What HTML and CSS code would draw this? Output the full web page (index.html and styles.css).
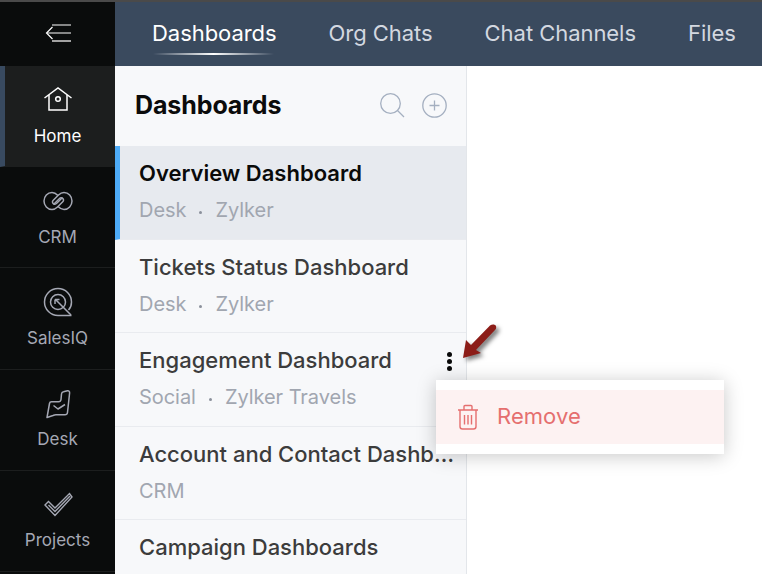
FILE: index.html
```html
<!DOCTYPE html>
<html lang="en">
<head>
<meta charset="utf-8">
<title>Dashboards</title>
<link rel="stylesheet" href="styles.css">
</head>
<body>
<div class="app">
  <nav class="rail">
    <div class="rail-top">
      <svg width="26" height="18" viewBox="0 0 26 18" fill="none" stroke="#fff" stroke-width="1.2"><path d="M7 1H26M2 9H26" /><path d="M7 17H26" stroke="#c9c9c9" stroke-width="1.6" /><path d="M7.500 3L1.500 9L7.500 15" /></svg>
    </div>
    <a class="rail-item active">
      <svg width="30" height="26" viewBox="0 0 30 26" fill="none" stroke="#fff" stroke-width="1.5"><path d="M1.500 12L15 2L28.500 12" /><path d="M6 9V24H24V9" /><circle cx="15" cy="13" r="2.300" /></svg>
      <span>Home</span>
    </a>
    <a class="rail-item">
      <svg width="30" height="20" viewBox="0 0 30 20" fill="none" stroke="#a5a8b4" stroke-width="1.500"><path d="M15 4.500C13 2.500 11 1.500 9 1.500C4.500 1.500 1 5.500 1 10C1 14.500 4.500 18.500 9 18.500C11.500 18.500 13 17.500 14.500 16L20 10.500C21 9.500 20.500 7.500 19 7C18 6.500 17 7 16 8L10.500 13.500" /><path d="M15 15.500C17 17.500 19 18.500 21 18.500C25.500 18.500 29 14.500 29 10C29 5.500 25.500 1.500 21 1.500C18.500 1.500 17 2.500 15.500 4L10 9.500C9 10.500 9.500 12.500 11 13C12 13.500 13 13 14 12L19.500 6.500" /></svg>
      <span>CRM</span>
    </a>
    <a class="rail-item">
      <svg width="30" height="30" viewBox="0 0 30 30" fill="none" stroke="#a5a8b4" stroke-width="1.500"><path d="M28.500 28.500H15A13.500 13.500 0 1 1 28.500 15C28.500 18 27.500 21 25.500 23" /><circle cx="15" cy="15" r="7.500" /><path d="M13 13L28 28M12 12.500V17M12 12.500H16.500" /></svg>
      <span>SalesIQ</span>
    </a>
    <a class="rail-item">
      <svg width="26" height="30" viewBox="0 0 26 30" fill="none" stroke="#a5a8b4" stroke-width="1.500" stroke-linejoin="round"><path d="M2 28.500L4.500 14.500C4.700 13.300 5.500 12.800 6.500 12.800H13.500C15 12.800 15.800 12 16 10.500L16.500 5C16.600 3.800 17.500 3 18.500 2.800L22.500 1.800C23.800 1.600 24.800 2.500 24.600 4L22.500 23.500C22.300 25 21.300 25.700 20 25.700H11C9.800 25.700 9 26 8 26.500L2 28.500Z" /><path d="M8.500 16.500L13 20L20 15.500" /></svg>
      <span>Desk</span>
    </a>
    <a class="rail-item">
      <svg width="30" height="26" viewBox="0 0 30 26" fill="none" stroke="#a5a8b4" stroke-width="1.400"><path d="M2 13L5.500 9.500L12 16L26.500 1.500L29 5L12 23.500Z" /><path d="M5.500 13L12 19.500L27 4" /></svg>
      <span>Projects</span>
    </a>
  </nav>
  <main class="main">
    <header class="tabs">
      <a class="tab current">Dashboards</a>
      <a class="tab">Org Chats</a>
      <a class="tab">Chat Channels</a>
      <a class="tab">Files</a>
    </header>
    <div class="content">
      <section class="panel">
        <div class="panel-head">
          <h1>Dashboards</h1>
          <svg class="ic-search" width="25" height="25" viewBox="0 0 25 25" fill="none" stroke="#a4afc0" stroke-width="1.300"><circle cx="10.500" cy="10.500" r="9.800" /><path d="M17.500 17.500L24 24" /></svg>
          <svg class="ic-add" width="25" height="25" viewBox="0 0 25 25" fill="none" stroke="#a4afc0" stroke-width="1.300"><circle cx="12.500" cy="12.500" r="11.700" /><path d="M12.500 7.500V17.500M7.500 12.500H17.500" /></svg>
        </div>
        <div class="row selected">
          <div class="row-title">Overview Dashboard</div>
          <div class="row-sub"><span>Desk</span><i class="dot"></i><span>Zylker</span></div>
        </div>
        <div class="row">
          <div class="row-title">Tickets Status Dashboard</div>
          <div class="row-sub"><span>Desk</span><i class="dot"></i><span>Zylker</span></div>
        </div>
        <div class="row">
          <div class="row-title">Engagement Dashboard</div>
          <div class="row-sub"><span>Social</span><i class="dot"></i><span>Zylker Travels</span></div>
          <div class="more"><i></i><i></i><i></i></div>
        </div>
        <div class="row">
          <div class="row-title">Account and Contact Dashboards</div>
          <div class="row-sub"><span>CRM</span></div>
        </div>
        <div class="row">
          <div class="row-title">Campaign Dashboards</div>
        </div>
      </section>
    </div>
    <svg class="arrow" width="44" height="44" viewBox="0 0 44 44">
      <path class="arrow-body" d="M3 35L6 17L11 22L30 2.500C32 1 35 1 36 3C36.500 5 36 6 35 7L16 27L21 30Z" />
    </svg>
    <div class="menu">
      <div class="menu-item">
        <svg width="22" height="26" viewBox="0 0 22 26" fill="none" stroke="#e56f6f" stroke-width="1.400"><path d="M1 6H21M7 6V2.500C7 1.800 7.500 1.500 8 1.500H14C14.500 1.500 15 1.800 15 2.500V6" /><path d="M3 6V22.500C3 24 4 25 5.500 25H16.500C18 25 19 24 19 22.500V6" /><path d="M7.500 11V20.500M11 11V20.500M14.500 11V20.500" /></svg>
        <span>Remove</span>
      </div>
    </div>
  </main>
</div>
</body>
</html>
```

FILE: styles.css
```css
* { box-sizing: border-box; }
html, body { margin: 0; height: 100%; overflow: hidden; }
body {
  width: 762px;
  height: 574px;
  background: #fff;
  border-top: 2px solid #4a4a4a;
  font-family: Inter, "Liberation Sans", sans-serif;
}
.app { display: flex; height: 572px; }

.rail {
  width: 115px;
  flex: none;
  background: #0a0c0c;
  display: flex;
  flex-direction: column;
}
.rail-top {
  height: 64px;
  flex: none;
  display: flex;
  align-items: center;
  justify-content: center;
  padding-bottom: 2px;
}
.rail-item {
  height: 101.300px;
  flex: none;
  display: flex;
  flex-direction: column;
  align-items: center;
  justify-content: flex-start;
  border-bottom: 1px solid #1c1e1e;
  color: #a5a8b4;
  font-size: 17px;
  line-height: 20px;
}
.rail-item svg { height: 30px; margin-top: 19px; }
.rail-item span { margin-top: 10.600px; }
.rail-item.active {
  height: 101px;
  background: #1c1e1e;
  border-left: 5px solid #384a60;
  padding-right: 5px;
  color: #fff;
}
.rail-item.active svg { margin-top: 18px; }
.rail-item.active span { margin-top: 12px; }

.main { flex: 1; position: relative; min-width: 0; display: flex; flex-direction: column; }
.tabs {
  height: 64px;
  flex: none;
  background: #3a4a5e;
  display: flex;
  align-items: center;
  gap: 52px;
  padding: 0 0 0 37px;
  overflow: hidden;
  white-space: nowrap;
}
.tab { font-size: 22px; letter-spacing: -0.050px; color: #d3d8e0; position: relative; line-height: 30px; margin-bottom: 2px; }
.tab.current { color: #fff; }
.tab.current::after {
  content: "";
  position: absolute;
  left: 1px;
  right: 3px;
  bottom: -7px;
  height: 2px;
  background: linear-gradient(90deg, transparent, #fff 50%, transparent);
}

.content { flex: 1; display: flex; min-height: 0; }
.panel {
  width: 352px;
  flex: none;
  background: #f7f8fa;
  border-right: 1px solid #e3e6ea;
  overflow: hidden;
}
.panel-head {
  height: 80.400px;
  display: flex;
  align-items: center;
  padding: 0 19px 2px 20px;
}
.panel-head h1 {
  margin: 0 auto 0 0;
  font-size: 25px;
  font-weight: 700;
  letter-spacing: -0.100px;
  color: #0b0b0b;
}
.ic-search { margin-right: 17px; }
.ic-add { margin-right: 0; }

.row {
  position: relative;
  height: 93.600px;
  padding: 13px 8px 0 24px;
  border-bottom: 1px solid #e9ebef;
}
.row.selected {
  background: #e7eaef;
  border-left: 5px solid #4dabf7;
  padding-left: 19px;
  margin-top: -0.400px;
}
.row-title {
  font-size: 22px;
  line-height: 28px;
  font-weight: 500;
  letter-spacing: 0;
  color: #3c3c3c;
  white-space: nowrap;
  overflow: hidden;
  text-overflow: ellipsis;
}
.selected .row-title { color: #0a0a0a; font-weight: 600; }
.row-sub {
  margin-top: 10px;
  font-size: 20px;
  line-height: 26px;
  letter-spacing: -0.050px;
  color: #a1a6b0;
  display: flex;
  align-items: center;
  gap: 13px;
}
.dot { width: 3px; height: 3px; border-radius: 50%; background: #8b909b; margin-top: 5px; }
.more {
  position: absolute;
  left: 332px;
  top: 19px;
  display: flex;
  flex-direction: column;
  gap: 2px;
}
.more i { width: 5px; height: 5px; border-radius: 50%; background: #0a0a0a; }

.arrow { position: absolute; left: 345px; top: 321px; overflow: visible; }
.arrow-body { fill: #8c1d18; filter: drop-shadow(3px 3px 2px rgba(0, 0, 0, .5)); }

.menu {
  position: absolute;
  left: 321px;
  top: 378px;
  width: 288px;
  height: 74px;
  padding: 10px 0;
  background: #fff;
  box-shadow: 0 2px 18px rgba(0, 0, 0, .22);
}
.menu-item {
  height: 54px;
  background: #fdf2f2;
  display: flex;
  align-items: center;
  gap: 18px;
  padding-left: 21px;
  color: #e56f6f;
  font-size: 22px;
  letter-spacing: 0.050px;
}
.menu-item span { margin-bottom: 2px; }
```
